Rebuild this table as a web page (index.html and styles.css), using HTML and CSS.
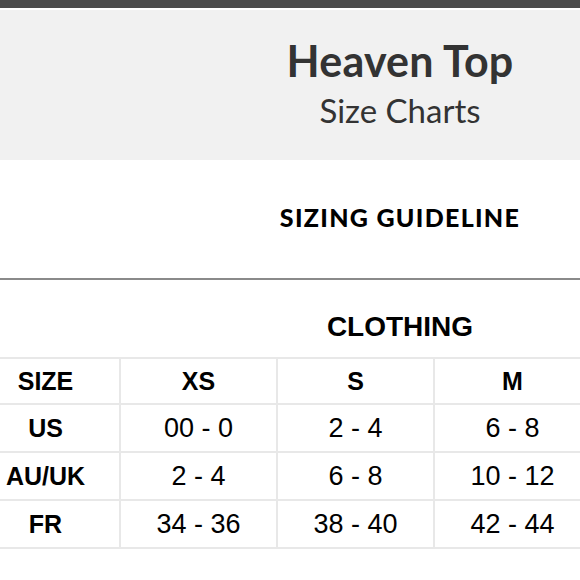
FILE: index.html
```html
<!DOCTYPE html>
<html>
<head>
<meta charset="utf-8">
<link rel="stylesheet" href="styles.css">
</head>
<body>
<div class="topbar"></div>
<header class="hero">
  <h1 class="title">Heaven Top</h1>
  <p class="subtitle">Size Charts</p>
</header>
<section class="guide">
  <h2 class="guide-title">SIZING GUIDELINE</h2>
</section>
<hr class="rule">
<section class="chart">
  <h3 class="chart-title">CLOTHING</h3>
  <table class="sizes">
    <tr class="head"><th>SIZE</th><th>XS</th><th>S</th><th>M</th></tr>
    <tr><th>US</th><td>00 - 0</td><td>2 - 4</td><td>6 - 8</td></tr>
    <tr><th>AU/UK</th><td>2 - 4</td><td>6 - 8</td><td>10 - 12</td></tr>
    <tr><th>FR</th><td>34 - 36</td><td>38 - 40</td><td>42 - 44</td></tr>
  </table>
</section>
</body>
</html>
```
FILE: styles.css
```css
html, body {
  margin: 0;
  padding: 0;
  background: #fff;
  overflow: hidden;
}
body {
  width: 580px;
  font-family: "Liberation Sans", Arial, sans-serif;
}
.topbar {
  height: 8px;
  background: #4b4b4b;
  border-bottom: 2px solid #fff;
}
.hero {
  background: #f1f1f1;
  height: 150px;
  padding-left: 220px;
  text-align: center;
  color: #333;
  font-family: Lato, "Open Sans", sans-serif;
}
.title {
  margin: 0;
  padding-top: 26px;
  font-size: 43px;
  line-height: 50px;
  font-weight: 700;
  letter-spacing: 0.2px;
}
.subtitle {
  margin: 0;
  font-size: 33px;
  line-height: 48px;
  font-weight: 400;
}
.guide {
  padding-left: 220px;
  text-align: center;
  height: 118px;
}
.guide-title {
  margin: 0;
  padding-top: 42px;
  font-family: Lato, "Open Sans", sans-serif;
  font-size: 25px;
  line-height: 30px;
  font-weight: 900;
  letter-spacing: 1.3px;
  color: #000;
}
.rule {
  margin: 0;
  border: 0;
  height: 2px;
  background: #8a8a8a;
}
.chart-title {
  margin: 0;
  padding-left: 220px;
  text-align: center;
  font-size: 28px;
  line-height: 32px;
  padding-top: 31px;
  height: 46px;
  font-weight: 700;
  color: #000;
}
.sizes {
  margin-left: -30px;
  border-collapse: collapse;
  table-layout: fixed;
  width: 620px;
  color: #000;
}
.sizes th, .sizes td {
  border: 2px solid #e8e8e8;
  text-align: center;
  height: 46px;
  padding: 0;
  font-size: 27px;
}
.sizes th {
  font-weight: 700;
  font-size: 25px;
}
.sizes th:first-child { width: 147px; }
.sizes td, .sizes .head th:not(:first-child) { width: 155px; }
.sizes .head th { height: 44px; }
```
